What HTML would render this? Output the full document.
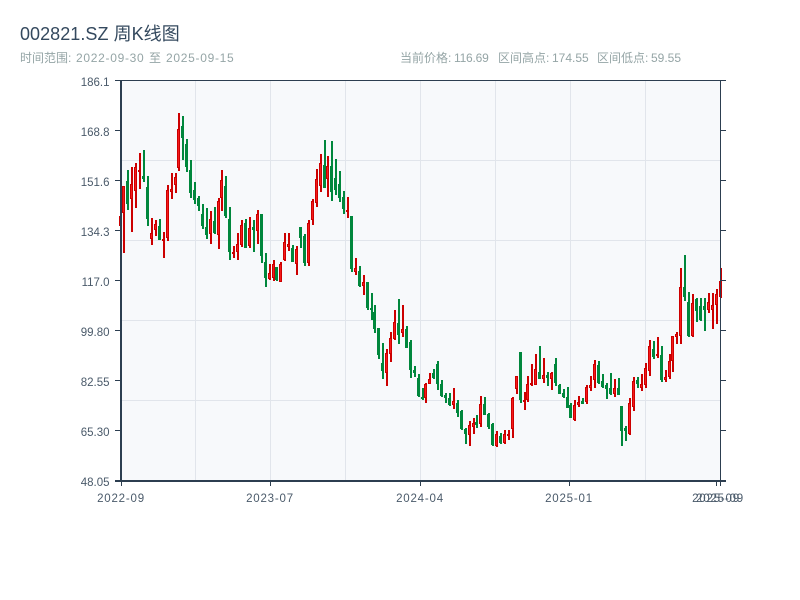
<!DOCTYPE html>
<html lang="zh">
<head>
<meta charset="utf-8">
<title>002821.SZ 周K线图</title>
<style>
html,body{margin:0;padding:0;background:#fff;}
body{width:800px;height:600px;overflow:hidden;position:relative;font-family:"Liberation Sans","Noto Sans CJK SC",sans-serif;}
.t{position:absolute;white-space:nowrap;}
.s{top:50px;font-size:12px;line-height:17px;color:#95a5a6;}
.d{letter-spacing:.7px;}
svg{position:absolute;left:0;top:0;}
svg text{font-family:"Liberation Sans","Noto Sans CJK SC",sans-serif;font-size:11.5px;fill:#4a5a6a;}
</style>
</head>
<body>
<div class="t" style="left:20px;top:22px;font-size:18px;line-height:24px;color:#34495e;letter-spacing:.05px;">002821.SZ 周K线图</div>
<div class="t s" style="left:20px;">时间范围:</div>
<div class="t s d" style="left:76px;">2022-09-30</div>
<div class="t s" style="left:149px;">至</div>
<div class="t s d" style="left:166px;">2025-09-15</div>
<div class="t s" style="left:400px;">当前价格:</div>
<div class="t s" style="left:454px;letter-spacing:-.2px;">116.69</div>
<div class="t s" style="left:498px;">区间高点:</div>
<div class="t s" style="left:552px;">174.55</div>
<div class="t s" style="left:597px;">区间低点:</div>
<div class="t s" style="left:651px;">59.55</div>
<svg width="800" height="600" viewBox="0 0 800 600" shape-rendering="crispEdges">
<rect x="121" y="81" width="599" height="400" fill="#f7f9fb"/>
<path fill="none" stroke="#e1e5eb" stroke-width="1" d="M195.5 81V481M270.5 81V481M345.5 81V481M420.5 81V481M495.5 81V481M570.5 81V481M645.5 81V481M121 160.5H720M121 240.5H720M121 320.5H720M121 400.5H720"/>

<path fill="none" stroke="#cc0000" stroke-width="2" d="M121 216V226M124 186V253M132 167V232M136 163V208M140 153V189M152 218V245M156 220V236M164 232V258M168 185V241M172 173V199M176 173V193M179 113V171M211 211V244M219 198V249M222 170V211M234 246V258M238 233V260M242 220V247M250 217V248M258 210V244M270 264V280M274 260V281M281 262V282M285 233V261M289 233V251M297 246V275M309 220V266M313 199V225M317 169V207M321 154V192M328 156V197M348 197V218M356 258V275M364 275V295M387 349V386M391 332V362M395 310V340M403 305V337M426 383V403M430 373V384M454 388V409M470 421V446M474 418V434M481 396V427M497 431V447M505 430V444M509 430V440M513 397V438M517 376V394M525 392V410M528 376V402M532 364V386M536 354V385M544 358V383M552 372V390M575 400V421M579 396V407M587 385V404M591 376V391M595 360V388M615 379V397M630 398V435M634 377V411M642 374V391M646 363V388M650 340V376M658 337V358M666 370V382M670 354V379M673 336V372M677 332V344M681 268V344M693 294V337M709 293V313M713 293V329M717 289V324M721 268V298"/>
<path fill="#f51a1a" stroke="#cc0000" stroke-width="1" d="M119.5 216.5h2V225.5h-2zM122.5 186.5h2V212.5h-2zM130.5 184.5h2V198.5h-2zM134.5 167.5h2V190.5h-2zM138.5 170.5h2V171.5h-2zM150.5 233.5h2V238.5h-2zM154.5 224.5h2V229.5h-2zM162.5 239.5h2V240.5h-2zM166.5 190.5h2V237.5h-2zM170.5 189.5h2V191.5h-2zM174.5 177.5h2V184.5h-2zM177.5 129.5h2V167.5h-2zM209.5 219.5h2V233.5h-2zM217.5 201.5h2V234.5h-2zM220.5 180.5h2V197.5h-2zM232.5 252.5h2V253.5h-2zM236.5 244.5h2V251.5h-2zM240.5 225.5h2V244.5h-2zM248.5 228.5h2V245.5h-2zM256.5 214.5h2V230.5h-2zM268.5 273.5h2V278.5h-2zM272.5 264.5h2V277.5h-2zM279.5 264.5h2V281.5h-2zM283.5 242.5h2V259.5h-2zM287.5 244.5h2V246.5h-2zM295.5 249.5h2V263.5h-2zM307.5 223.5h2V262.5h-2zM311.5 201.5h2V219.5h-2zM315.5 179.5h2V202.5h-2zM319.5 163.5h2V185.5h-2zM326.5 166.5h2V178.5h-2zM346.5 210.5h2V211.5h-2zM354.5 268.5h2V271.5h-2zM362.5 282.5h2V285.5h-2zM385.5 353.5h2V372.5h-2zM389.5 338.5h2V353.5h-2zM393.5 322.5h2V338.5h-2zM401.5 329.5h2V332.5h-2zM424.5 384.5h2V397.5h-2zM428.5 379.5h2V383.5h-2zM452.5 401.5h2V404.5h-2zM468.5 425.5h2V434.5h-2zM472.5 423.5h2V426.5h-2zM479.5 404.5h2V423.5h-2zM495.5 434.5h2V445.5h-2zM503.5 434.5h2V442.5h-2zM507.5 434.5h2V435.5h-2zM511.5 398.5h2V428.5h-2zM515.5 376.5h2V388.5h-2zM523.5 400.5h2V401.5h-2zM526.5 384.5h2V399.5h-2zM530.5 383.5h2V384.5h-2zM534.5 369.5h2V384.5h-2zM542.5 375.5h2V378.5h-2zM550.5 373.5h2V378.5h-2zM573.5 405.5h2V419.5h-2zM577.5 402.5h2V404.5h-2zM585.5 387.5h2V401.5h-2zM589.5 385.5h2V387.5h-2zM593.5 364.5h2V379.5h-2zM613.5 388.5h2V393.5h-2zM628.5 403.5h2V433.5h-2zM632.5 381.5h2V406.5h-2zM640.5 384.5h2V387.5h-2zM644.5 368.5h2V384.5h-2zM648.5 346.5h2V370.5h-2zM656.5 354.5h2V355.5h-2zM664.5 377.5h2V379.5h-2zM668.5 361.5h2V376.5h-2zM671.5 336.5h2V360.5h-2zM675.5 334.5h2V336.5h-2zM679.5 287.5h2V335.5h-2zM691.5 303.5h2V335.5h-2zM707.5 302.5h2V309.5h-2zM711.5 305.5h2V309.5h-2zM715.5 294.5h2V304.5h-2zM719.5 281.5h2V296.5h-2z"/>

<path fill="none" stroke="#00873c" stroke-width="2" d="M128 170V210M144 150V182M148 176V226M160 219V240M183 116V160M187 139V172M191 160V198M195 182V204M199 196V211M203 204V229M207 208V239M215 207V234M226 176V218M230 207V260M246 219V248M254 220V252M262 214V263M266 253V287M277 267V281M293 245V262M301 227V248M305 234V266M325 140V188M332 141V201M336 159V195M340 171V202M344 191V214M352 216V272M360 266V287M368 282V310M372 293V320M375 305V333M379 328V359M383 343V379M399 299V344M407 326V348M411 340V378M415 366V377M419 374V397M423 388V400M434 369V379M438 361V390M442 380V397M446 393V403M450 393V406M458 400V417M462 410V430M466 428V444M477 415V428M485 397V415M489 413V429M493 423V446M501 433V444M521 352V403M540 346V379M548 372V386M556 358V386M560 384V394M564 389V398M568 387V408M571 403V418M583 398V404M599 361V384M603 374V388M607 383V399M611 373V395M619 378V395M622 406V446M626 426V441M638 377V388M654 341V359M662 346V382M685 255V301M689 292V337M697 298V322M701 298V321M705 298V331"/>
<path fill="none" stroke="#00873c" stroke-width="3" d="M127.5 181V204M143.5 176V179M147.5 187V219M159.5 226V240M182.5 126V138M186.5 144V167M190.5 170V193M194.5 190V200M198.5 198V206M202.5 214V226M206.5 227V235M214.5 221V233M225.5 186V216M229.5 219V252M245.5 223V248M253.5 227V230M261.5 214V256M265.5 262V278M276.5 267V280M292.5 248V262M300.5 227V238M304.5 236V263M324.5 165V188M331.5 166V192M335.5 178V190M339.5 184V198M343.5 197V209M351.5 216V269M359.5 271V286M367.5 282V308M371.5 308V310M374.5 312V329M378.5 328V355M382.5 363V371M398.5 323V335M406.5 329V348M410.5 342V370M414.5 370V373M418.5 378V396M422.5 397V399M433.5 373V378M437.5 364V384M441.5 384V396M445.5 395V398M449.5 398V405M457.5 403V413M461.5 411V429M465.5 429V434M476.5 422V425M484.5 404V415M488.5 414V427M492.5 424V445M500.5 436V443M520.5 352V400M539.5 372V379M547.5 375V378M555.5 364V383M559.5 385V394M563.5 393V397M567.5 397V408M570.5 405V418M582.5 401V404M598.5 365V383M602.5 381V387M606.5 385V389M610.5 388V394M618.5 388V395M621.5 406V431M625.5 428V431M637.5 380V384M653.5 349V357M661.5 355V380M684.5 287V297M688.5 302V336M696.5 299V311M700.5 306V320M704.5 306V310"/>

<g fill="none" stroke="#2c3e50">
<path stroke-width="1" d="M121 80.5H726M720.5 80V482M115 80.5H121M115 130.5H120M115 180.5H120M115 230.5H120M115 280.5H120M115 330.5H120M115 380.5H120M115 430.5H120M721 130.5H726M721 180.5H726M721 230.5H726M721 280.5H726M721 330.5H726M721 380.5H726M721 430.5H726M121.5 482V486M270.5 482V486M420.5 482V486M569.5 482V486M716.5 482V486M720.5 482V486"/>
<path stroke-width="2" d="M121 80V482M115 481H726"/>
</g>
<g text-anchor="end" shape-rendering="auto">
<text x="109.5" y="86">186.1</text>
<text x="109.5" y="136">168.8</text>
<text x="109.5" y="186">151.6</text>
<text x="109.5" y="236">134.3</text>
<text x="109.5" y="286">117.0</text>
<text x="109.5" y="336">99.80</text>
<text x="109.5" y="386">82.55</text>
<text x="109.5" y="436">65.30</text>
<text x="109.5" y="486">48.05</text>
</g>
<g text-anchor="middle" shape-rendering="auto" style="letter-spacing:.8px">
<text x="121" y="502">2022-09</text>
<text x="270" y="502">2023-07</text>
<text x="420" y="502">2024-04</text>
<text x="569" y="502">2025-01</text>
<text x="716" y="502">2025-09</text>
<text x="720" y="502">2025-09</text>
</g>
</svg>
</body>
</html>
